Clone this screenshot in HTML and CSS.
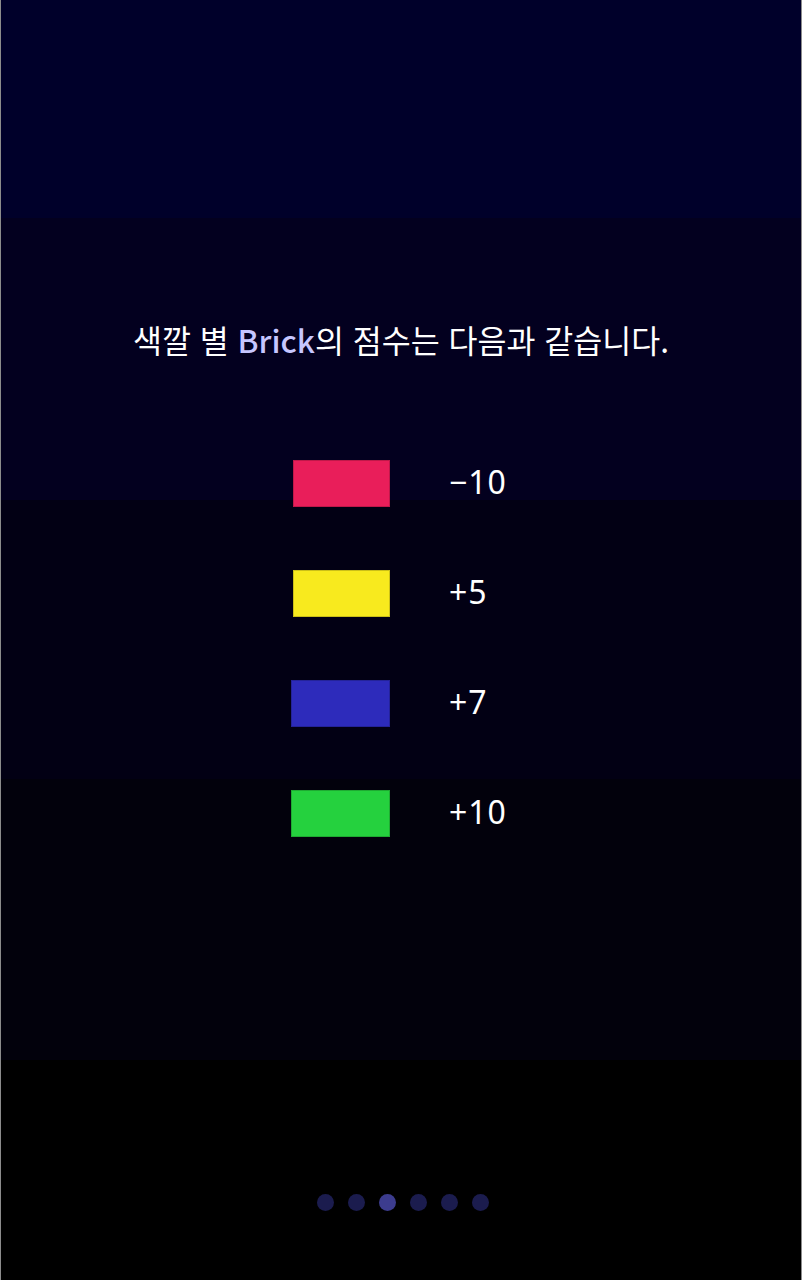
FILE: index.html
```html
<!DOCTYPE html>
<html lang="ko">
<head>
<meta charset="utf-8">
<title>Brick</title>
<link rel="stylesheet" href="styles.css">
</head>
<body>
<main class="screen">
  <h1 class="title">색깔 별 <span class="accent">Brick</span>의 점수는 다음과 같습니다.</h1>
  <ul class="scores">
    <li class="row"><span class="brick brick-red"></span><span class="pts">−10</span></li>
    <li class="row"><span class="brick brick-yellow"></span><span class="pts">+5</span></li>
    <li class="row"><span class="brick brick-blue"></span><span class="pts">+7</span></li>
    <li class="row"><span class="brick brick-green"></span><span class="pts">+10</span></li>
  </ul>
  <div class="dots">
    <span class="dot"></span>
    <span class="dot"></span>
    <span class="dot active"></span>
    <span class="dot"></span>
    <span class="dot"></span>
    <span class="dot"></span>
  </div>
</main>
</body>
</html>
```
FILE: styles.css
```css
html, body {
  margin: 0;
  padding: 0;
  background: #000;
}

.screen {
  box-sizing: border-box;
  width: 802px;
  height: 1280px;
  border-left: 1px solid #8c8c8c;
  border-right: 1px solid #8c8c8c;
  background: linear-gradient(to bottom,
    #00002a 0, #00002a 218px,
    #03001f 218px, #03001f 500px,
    #020014 500px, #020014 779px,
    #02010c 779px, #02010c 1060px,
    #000000 1060px, #000000 1280px);
  display: flex;
  flex-direction: column;
  align-items: center;
  font-family: "Noto Sans CJK KR", "Noto Sans", sans-serif;
  color: #ffffff;
}

.title {
  margin: 317px 0 0;
  font-size: 31.5px;
  font-weight: 400;
  line-height: 44px;
  letter-spacing: 0;
  white-space: nowrap;
}

.accent {
  color: #c6c6ff;
  font-weight: 500;
}

.scores {
  list-style: none;
  margin: 99px 0 0;
  padding: 0;
  align-self: flex-start;
  margin-left: 290px;
  display: flex;
  flex-direction: column;
  gap: 63px;
}

.row {
  display: grid;
  grid-template-columns: 99px auto;
  column-gap: 59px;
  align-items: center;
  height: 47px;
}

.brick {
  justify-self: end;
  box-sizing: border-box;
  height: 47px;
  border: 1px solid rgba(0, 0, 0, 0.18);
}

.brick-red { width: 97px; background: #e91e5a; }
.brick-yellow { width: 97px; background: #f8ea1e; }
.brick-blue { width: 99px; background: #2d2bbb; }
.brick-green { width: 99px; background: #25d13e; }

.pts {
  font-size: 32px;
  line-height: 44px;
  padding-bottom: 3px;
  letter-spacing: 1px;
  font-family: "Noto Sans", "Noto Sans CJK KR", sans-serif;
}

.dots {
  margin-top: auto;
  margin-bottom: 69px;
  padding-left: 3px;
  display: flex;
  gap: 14px;
}

.dot {
  width: 17px;
  height: 17px;
  border-radius: 50%;
  background: #1b1c4e;
}

.dot.active {
  background: #3c3c8e;
}
```
